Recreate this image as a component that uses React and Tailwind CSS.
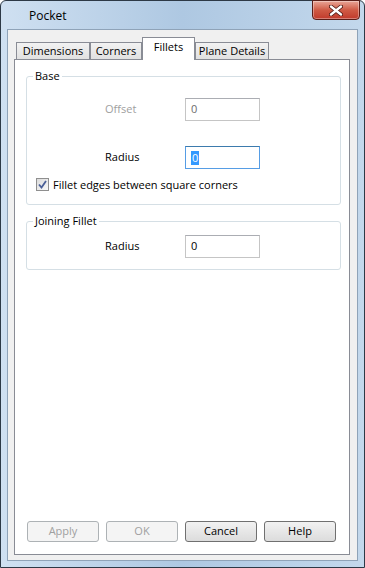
import React from "react";

const font = { fontFamily: '"Open Sans", "Noto Sans", sans-serif' };

function Tab({ label, active, className }) {
  if (active) {
    return (
      <div
        className={`relative z-10 -mb-px flex h-[23px] items-start justify-center border border-b-0 border-[#898c95] bg-white pt-[1px] text-[11px] text-black ${className}`}
      >
        {label}
      </div>
    );
  }
  return (
    <div
      className={`flex h-[17px] items-center justify-center border border-b-0 border-[#898c95] bg-gradient-to-b from-[#f2f2f2] to-[#e1e1e1] text-[11px] text-black ${className}`}
    >
      {label}
    </div>
  );
}

function Field({ label, value, disabled, focused }) {
  return (
    <div className="flex items-center">
      <span
        className={`ml-[78px] w-[80px] text-[11px] ${
          disabled ? "text-[#a0a0a0]" : "text-black"
        }`}
      >
        {label}
      </span>
      <div
        className={`flex h-[23px] w-[75px] items-center border bg-white pl-[5px] text-[11px] ${
          focused
            ? "border-[#569de5] border-t-[#3d7bad]"
            : "border-[#c5c5c5] border-t-[#abadb3]"
        } ${disabled ? "text-[#6d6d6d]" : "text-black"}`}
      >
        {focused ? (
          <span className="bg-[#3399ff] px-[1px] leading-[14px] text-white">
            {value}
          </span>
        ) : (
          value
        )}
      </div>
    </div>
  );
}

function Button({ label, disabled }) {
  return (
    <div
      className={`flex h-[21px] w-[72px] items-center justify-center rounded-[3px] border text-[11px] ${
        disabled
          ? "border-[#adb2b5] bg-[#f4f4f4] text-[#a0a0a0]"
          : "border-[#707070] bg-gradient-to-b from-[#f2f2f2] to-[#dcdcdc] text-black"
      }`}
    >
      {label}
    </div>
  );
}

export default function App() {
  return (
    <div
      className="flex h-[568px] w-[365px] flex-col rounded-t-[6px] border border-[#2d3946] bg-gradient-to-r from-[#cfe0f1] via-[#aec8e2] to-[#c3d8ec]"
      style={font}
    >
      {/* title bar */}
      <div className="flex h-[28px] shrink-0 items-start justify-between">
        <span className="ml-[28px] mt-[6px] text-[12px] text-black">Pocket</span>
        <div className="mr-[4px] -mt-px flex h-[20px] w-[48px] items-center justify-center rounded-b-[4px] border border-[#5a1e18] bg-gradient-to-b from-[#e8a597] via-[#cf5a45] to-[#c0392b] shadow-[inset_0_0_0_1px_rgba(255,255,255,0.35)]">
          <svg width="14" height="11" viewBox="0 0 14 11">
            <path
              d="M2 1.5 L12 9.5 M12 1.5 L2 9.5"
              stroke="#4a1510"
              strokeWidth="4"
              strokeLinecap="round"
            />
            <path
              d="M2 1.5 L12 9.5 M12 1.5 L2 9.5"
              stroke="#ffffff"
              strokeWidth="2.4"
              strokeLinecap="round"
            />
          </svg>
        </div>
      </div>

      {/* client area */}
      <div className="mx-[6px] mb-[6px] flex flex-1 flex-col border border-[#8fa3b8] bg-[#f0f0f0] pb-[5px] pl-[6px] pr-[7px] pt-[7px]">
        <div className="flex items-end">
          <Tab label="Dimensions" className="ml-[2px] w-[74px]" />
          <Tab label="Corners" className="w-[52px]" />
          <Tab label="Fillets" active className="w-[53px]" />
          <Tab label="Plane Details" className="w-[74px]" />
        </div>

        <div className="flex flex-1 flex-col border border-[#898c95] bg-white">
          <fieldset className="ml-[11px] mr-[8px] mt-[8px] rounded-[3px] border border-[#d5dfe5] pb-[12px] pl-0">
            <legend className="ml-[6px] px-[2px] text-[11px] leading-[16px] text-black">
              Base
            </legend>
            <div className="mt-[14px]">
              <Field label="Offset" value="0" disabled />
            </div>
            <div className="mt-[25px]">
              <Field label="Radius" value="0" focused />
            </div>
            <div className="ml-[9px] mt-[8px] flex h-[15px] items-center gap-[4px]">
              <div className="flex h-[13px] w-[13px] items-center justify-center border border-[#8f8f8f] bg-gradient-to-br from-[#dcdcdc] to-[#f8f8f8]">
                <svg width="9" height="9" viewBox="0 0 9 9">
                  <path
                    d="M1 4.5 L3.5 7.5 L8 1"
                    fill="none"
                    stroke="#4a5f97"
                    strokeWidth="1.8"
                  />
                </svg>
              </div>
              <span className="text-[11px] leading-[15px] text-black">
                Fillet edges between square corners
              </span>
            </div>
          </fieldset>

          <fieldset className="ml-[11px] mr-[8px] mt-[8px] rounded-[3px] border border-[#d5dfe5] pb-[11px] pl-0">
            <legend className="ml-[6px] px-[2px] text-[11px] leading-[16px] text-black">
              Joining Fillet
            </legend>
            <div className="mt-[6px]">
              <Field label="Radius" value="0" />
            </div>
          </fieldset>

          <div className="mt-auto mb-[12px] ml-[12px] flex gap-[7px]">
            <Button label="Apply" disabled />
            <Button label="OK" disabled />
            <Button label="Cancel" />
            <Button label="Help" />
          </div>
        </div>
      </div>
    </div>
  );
}
